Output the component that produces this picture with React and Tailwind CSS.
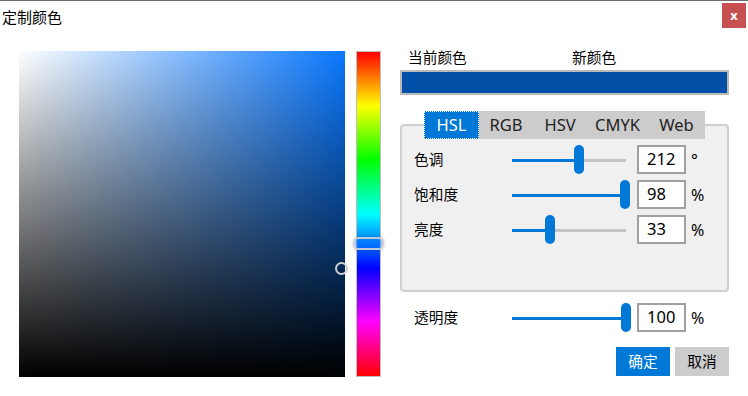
import React from 'react';

const font = "font-['Noto_Sans','Noto_Sans_CJK_SC',sans-serif]";

const tabs = [
  { name: 'HSL', w: 'w-[55px]', active: true },
  { name: 'RGB', w: 'w-[54px]' },
  { name: 'HSV', w: 'w-[54px]' },
  { name: 'CMYK', w: 'w-[61px]' },
  { name: 'Web', w: 'w-[57px]' },
];

const rows = [
  { label: '色调', value: '212', unit: '°', pos: 62 },
  { label: '饱和度', value: '98', unit: '%', pos: 108 },
  { label: '亮度', value: '33', unit: '%', pos: 33 },
];

function Slider({ pos }) {
  // track is 114px wide, thumb 10px; pos = thumb left offset
  return (
    <div className="relative w-[118px] h-[29px] shrink-0">
      <div className="absolute left-0 top-[14px] w-[114px] h-[3px] bg-[#c4c4c4]" />
      <div className="absolute left-0 top-[14px] h-[3px] bg-[#0078d7]" style={{ width: pos + 5 }} />
      <div className="absolute top-0 w-[10px] h-[29px] rounded-full bg-[#0078d7]" style={{ left: pos }} />
    </div>
  );
}

function Row({ label, value, unit, pos }) {
  return (
    <div className="flex items-center h-[29px]">
      <span className="w-[98px] shrink-0 text-[14.7px] text-black">{label}</span>
      <Slider pos={pos} />
      <div className="ml-[7px] w-[49px] h-[29px] shrink-0 border-2 border-[#a0a0a0] bg-white pl-[8px] flex items-center text-[16.5px] text-black">
        {value}
      </div>
      <span className="ml-[5px] text-[16px] text-black">{unit}</span>
    </div>
  );
}

export default function App() {
  return (
    <div className={`w-[748px] h-[396px] bg-white border-t border-[#6d6d6d] flex flex-col ${font}`}>
      {/* Title bar */}
      <div className="flex justify-between h-[46px]">
        <span className="ml-[2px] mt-[6px] text-[15px] leading-[20px] text-black">定制颜色</span>
        <button className="mt-[2px] mr-[2px] w-[24px] h-[25px] bg-[#c75050] text-white text-[13px] font-bold leading-none flex items-center justify-center">
          x
        </button>
      </div>

      <div className="flex">
        {/* SV square */}
        <div className="relative ml-[19px] mt-[4px] w-[326px] h-[326px] bg-[#0a78ff]">
          <div className="absolute inset-0 bg-gradient-to-r from-white to-transparent" />
          <div className="absolute inset-0 bg-gradient-to-b from-transparent to-black" />
          <div className="absolute left-[316px] top-[211px] w-[13px] h-[13px] rounded-full border-2 border-[#d0d0d0]" />
        </div>

        {/* Hue bar */}
        <div className="relative ml-[11px] mt-[4px] w-[25px] h-[326px] border border-[#bdbdbd] bg-[linear-gradient(to_bottom,#ff0000,#ffff00_16.7%,#00ff00_33.3%,#00ffff_50%,#0000ff_66.7%,#ff00ff_83.3%,#ff0000)]">
          <div className="absolute left-[-4px] top-[185px] w-[31px] h-[13px] rounded-[5px] border-2 border-[#d4d4d4]/90 shadow-[0_0_3px_rgba(0,0,0,0.25)] bg-[#0a78ff]/40" />
        </div>

        {/* Right panel */}
        <div className="ml-[19px] w-[329px] flex flex-col">
          <div className="flex h-[21px] items-center text-[14.7px] text-black">
            <span className="ml-[8px] w-[164px]">当前颜色</span>
            <span>新颜色</span>
          </div>
          <div className="mt-[2px] h-[25px] border-2 border-[#bababa] bg-[#0250a8]" />

          {/* Tabs */}
          <div className="relative z-10 mt-[16px] ml-[24px] flex h-[28px] bg-[#cccccc] w-[281px]">
            {tabs.map((t) => (
              <div
                key={t.name}
                className={`${t.w} h-full flex items-center justify-center text-[16.5px] ${
                  t.active ? 'bg-[#0078d7] text-white border border-dotted border-white' : 'text-[#222222]'
                }`}
              >
                {t.name}
              </div>
            ))}
          </div>

          {/* Group box */}
          <div className="-mt-[15px] h-[168px] rounded-[4px] border-2 border-[#cfcfcf] bg-[#f0f0f0] pt-[19px] pl-[12px] flex flex-col gap-[6px]">
            {rows.map((r) => (
              <Row key={r.label} {...r} />
            ))}
          </div>

          {/* Alpha */}
          <div className="mt-[11px] pl-[14px]">
            <Row label="透明度" value="100" unit="%" pos={109} />
          </div>

          {/* Buttons */}
          <div className="mt-[15px] flex justify-end gap-[5px]">
            <button className="w-[54px] h-[29px] bg-[#0078d7] text-white text-[14.7px]">确定</button>
            <button className="w-[54px] h-[29px] bg-[#cccccc] text-black text-[14.7px]">取消</button>
          </div>
        </div>
      </div>
    </div>
  );
}
